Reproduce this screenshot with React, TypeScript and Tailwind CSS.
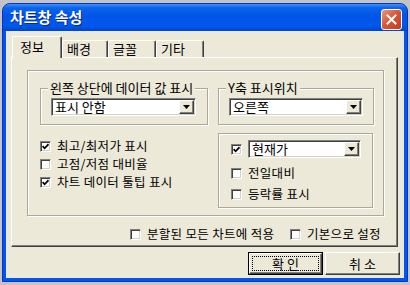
import React from 'react';

const sunken =
  'border border-t-[#808080] border-l-[#808080] border-r-white border-b-white shadow-[inset_1px_1px_0_#404040,inset_-1px_-1px_0_#d4d0c8]';
const raised =
  'border border-t-white border-l-white border-r-[#404040] border-b-[#404040] shadow-[inset_-1px_-1px_0_#808080]';
const etched = 'border border-[#aca899] shadow-[inset_1px_1px_0_#ffffff,1px_1px_0_#ffffff]';

const Check: React.FC<{ checked?: boolean }> = ({ checked }) => (
  <span className={`w-[11px] h-[11px] shrink-0 bg-white flex items-center justify-center ${sunken}`}>
    {checked && (
      <svg width="7" height="7" viewBox="0 0 7 7">
        <path d="M0.6 3.2 2.6 5.3 6.5 1.2" fill="none" stroke="#000" strokeWidth={1.7} />
      </svg>
    )}
  </span>
);

const Option: React.FC<{ label: string; checked?: boolean; className?: string }> = ({ label, checked, className = '' }) => (
  <div className={`flex items-center gap-[6px] h-[18px] ${className}`}>
    <Check checked={checked} />
    <span className="block text-[12.5px] leading-[18px] tracking-[0.3px] whitespace-nowrap">{label}</span>
  </div>
);

const Combo: React.FC<{ value: string; className?: string }> = ({ value, className = '' }) => (
  <div className={`h-[18px] p-[1px] bg-white flex items-center ${sunken} ${className}`}>
    <span className="flex-1 pl-[2px] leading-[14px] whitespace-nowrap">{value}</span>
    <span className={`w-[15px] h-[14px] bg-[#ece9d8] flex items-center justify-center ${raised}`}>
      <svg width="7" height="4" viewBox="0 0 7 4">
        <path d="M0 0h7L3.5 4z" fill="#000" />
      </svg>
    </span>
  </div>
);

const Group: React.FC<{ label: string; className?: string; children: React.ReactNode }> = ({ label, className = '', children }) => (
  <fieldset className={`h-[44px] px-[10px] pt-[3px] ${etched} ${className}`}>
    <legend className="-ml-[3px] px-[2px] leading-[14px] bg-[#ece9d8] whitespace-nowrap">{label}</legend>
    {children}
  </fieldset>
);

const tabs = [
  { label: '배경', w: 'w-[46px]' },
  { label: '글꼴', w: 'w-[48px]' },
  { label: '기타', w: 'w-[48px]' },
];

const App: React.FC = () => {
  return (
    <div className="w-[410px] h-[285px] bg-[#c4c4c4] pt-[3px] pl-[2px] font-['Noto_Sans_CJK_KR',sans-serif] text-[13px] text-black">
      <div className="w-[406px] h-[279px] rounded-t-[8px] bg-[#0055ea] border border-[#0733c6] flex flex-col overflow-hidden">
        {/* title bar */}
        <div className="h-[27px] flex items-start justify-between pl-[7px] pr-[5px] bg-[linear-gradient(180deg,#3d95ff_0%,#0c64ec_14%,#0055e5_45%,#0058ee_80%,#0047cc_100%)]">
          <span className="pt-[4px] text-white font-bold text-[15px] leading-[18px] [text-shadow:1px_1px_0_#0a2a8a]">
            차트창 속성
          </span>
          <div className="mt-[5px] w-[21px] h-[21px] rounded-[3px] border border-white bg-[linear-gradient(135deg,#eb9a7f_0%,#d8583a_45%,#c23c1a_100%)] flex items-center justify-center">
            <svg width="11" height="11" viewBox="0 0 11 11">
              <path d="M1.5 1.5l8 8M9.5 1.5l-8 8" stroke="#fff" strokeWidth={2} strokeLinecap="square" />
            </svg>
          </div>
        </div>

        {/* body */}
        <div className="flex-1 mx-[3px] mb-[3px] bg-[#ece9d8] pt-[5px] pl-[5px]">
          <div className="h-[21px] flex items-end pl-[1px]">
            <div className="relative z-10 -mb-[1px] h-[22px] w-[50px] bg-[#ece9d8] border-l border-t border-r border-l-white border-t-white border-r-[#404040] rounded-t-[2px] shadow-[inset_-1px_0_0_#808080] pl-[7px] pt-[3px] leading-[14px]">
              정보
            </div>
            {tabs.map((t) => (
              <div
                key={t.label}
                className={`h-[17px] ${t.w} bg-[#ece9d8] border-l border-t border-r border-l-white border-t-white border-r-[#404040] rounded-t-[2px] shadow-[inset_-1px_0_0_#808080] pl-[4px] pt-[1px] leading-[14px]`}
              >
                {t.label}
              </div>
            ))}
          </div>

          {/* tab panel */}
          <div className="w-[387px] h-[190px] border border-t-white border-l-white border-r-[#404040] border-b-[#404040] shadow-[inset_-1px_-1px_0_#808080] pt-[12px] pl-[15px]">
            <div className={`w-[357px] h-[146px] pl-[12px] pt-[10px] ${etched}`}>
              <div className="flex gap-[10px]">
                <Group label="왼쪽 상단에 데이터 값 표시" className="w-[168px]">
                  <Combo value="표시 안함" className="w-[145px]" />
                </Group>
                <Group label="Y축 표시위치" className="w-[155px]">
                  <Combo value="오른쪽" className="w-[134px]" />
                </Group>
              </div>

              <div className="flex gap-[10px] mt-[8px]">
                <div className="w-[168px] pt-[4px]">
                  <Option label="최고/최저가 표시" checked />
                  <Option label="고점/저점 대비율" />
                  <Option label="차트 데이터 툴팁 표시" checked />
                </div>
                <div className={`w-[155px] h-[75px] pl-[12px] pt-[6px] ${etched}`}>
                  <div className="flex items-center gap-[6px] h-[18px]">
                    <Check checked />
                    <Combo value="현재가" className="w-[113px]" />
                  </div>
                  <Option label="전일대비" className="mt-[6px]" />
                  <Option label="등락률 표시" className="mt-[3px]" />
                </div>
              </div>
            </div>

            <div className="flex mt-[9px] ml-[103px]">
              <Option label="분할된 모든 차트에 적용" className="w-[160px]" />
              <Option label="기본으로 설정" />
            </div>
          </div>

          {/* buttons */}
          <div className="flex justify-end gap-[2px] pr-[4px] mt-[5px]">
            <button className="w-[75px] h-[23px] border border-black bg-[#ece9d8] p-0">
              <div className={`w-full h-full p-[2px] ${raised}`}>
                <div className="w-full h-full border border-dotted border-black flex items-center justify-center leading-[14px]">
                  확 인
                </div>
              </div>
            </button>
            <button className={`w-[75px] h-[23px] bg-[#ece9d8] flex items-center justify-center leading-[14px] ${raised}`}>
              취 소
            </button>
          </div>
        </div>
      </div>
    </div>
  );
};

export default App;
